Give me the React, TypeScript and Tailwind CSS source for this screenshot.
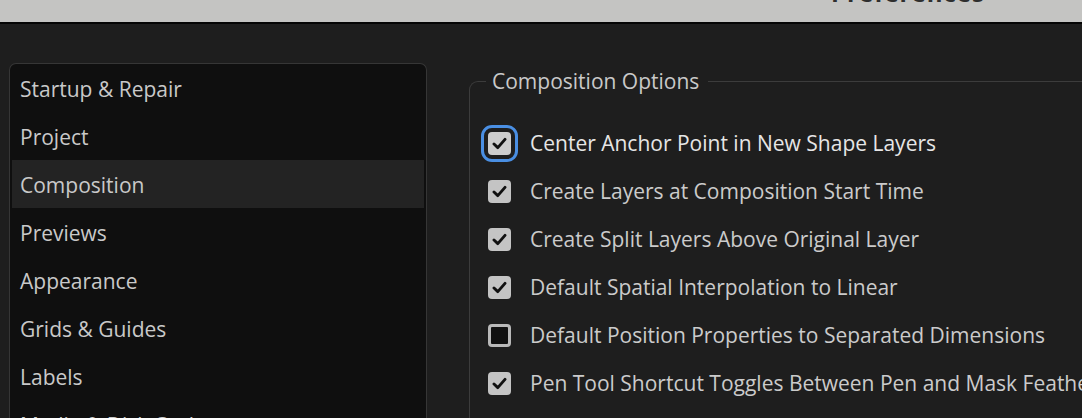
import React from "react";

const sidebarItems = [
  "Startup & Repair",
  "Project",
  "Composition",
  "Previews",
  "Appearance",
  "Grids & Guides",
  "Labels",
  "Media & Disk Cache",
];

const options: { label: string; checked: boolean; focused?: boolean }[] = [
  { label: "Center Anchor Point in New Shape Layers", checked: true, focused: true },
  { label: "Create Layers at Composition Start Time", checked: true },
  { label: "Create Split Layers Above Original Layer", checked: true },
  { label: "Default Spatial Interpolation to Linear", checked: true },
  { label: "Default Position Properties to Separated Dimensions", checked: false },
  { label: "Pen Tool Shortcut Toggles Between Pen and Mask Feather Tools", checked: true },
];

function Checkbox({ checked, focused }: { checked: boolean; focused?: boolean }) {
  if (!checked) {
    return (
      <div className="w-[23px] h-[23px] shrink-0 rounded-[4px] border-[3px] border-[#b9b9b9] bg-[#111111]" />
    );
  }
  return (
    <div
      className={
        focused
          ? "w-[23px] h-[23px] shrink-0 rounded-[4px] bg-[#cdcdcd] flex items-center justify-center outline-[3px] outline-solid outline-[#4a8fe3] outline-offset-[4px]"
          : "w-[23px] h-[23px] shrink-0 rounded-[4px] bg-[#c4c4c4] flex items-center justify-center"
      }
    >
      <svg width="15" height="13" viewBox="0 0 15 13" fill="none">
        <path d="M2 7 L5.8 10.6 L13 2.4" stroke="#111111" strokeWidth="2.9" strokeLinecap="round" strokeLinejoin="round" />
      </svg>
    </div>
  );
}

export default function App() {
  return (
    <div
      className="w-[1082px] h-[418px] overflow-hidden bg-[#1e1e1e] flex flex-col"
      style={{ fontFamily: '"Open Sans", "Noto Sans", sans-serif' }}
    >
      <div className="h-[22px] shrink-0 bg-[#c4c4c2] relative overflow-hidden">
        <div className="absolute left-[831px] top-[-19px] text-[24px] font-bold leading-[24px] text-[#2e2e2e] tracking-[1px]">
          Preferences
        </div>
      </div>
      <div className="h-[2px] shrink-0 bg-[#050505]" />
      <div className="flex flex-1 min-h-0 pl-[9px] pt-[39px] gap-[42px]">
        <div className="w-[418px] shrink-0 rounded-t-[7px] border border-b-0 border-[#363636] bg-[#0f0f0f] px-[2px]">
          {sidebarItems.map((item) => (
            <div
              key={item}
              className={
                item === "Composition"
                  ? "h-[48px] flex items-center pl-[8px] pt-[4px] text-[21px] text-[#c9c9c9] bg-[#232323]"
                  : "h-[48px] flex items-center pl-[8px] pt-[4px] text-[21px] text-[#c9c9c9]"
              }
            >
              {item}
            </div>
          ))}
        </div>
        <fieldset className="flex-1 min-w-0 mt-[4px] -mr-[40px] rounded-tl-[9px] border-t border-l border-[#3c3c3c] pl-[18px] pt-[24px]">
          <legend className="-ml-[2px] pl-[6px] pr-[9px] text-[21px] text-[#c9c9c9] leading-[28px]">Composition Options</legend>
          <div className="flex flex-col">
            {options.map((o) => (
              <div key={o.label} className="h-[48px] flex items-center gap-[19px] whitespace-nowrap">
                <Checkbox checked={o.checked} focused={o.focused} />
                <span className={o.focused ? "text-[21px] text-[#e6e6e6] pt-[1px]" : "text-[21px] text-[#cbcbcb] pt-[1px]"}>
                  {o.label}
                </span>
              </div>
            ))}
          </div>
        </fieldset>
      </div>
    </div>
  );
}
